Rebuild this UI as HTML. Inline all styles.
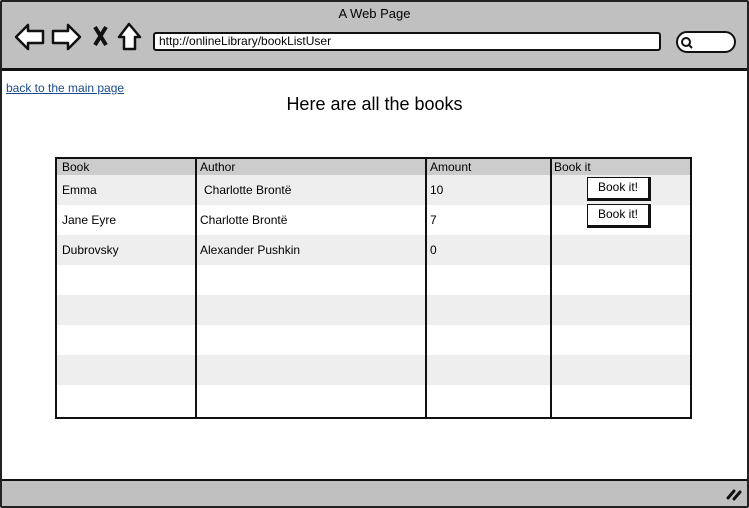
<!DOCTYPE html>
<html><head><style>
*{margin:0;padding:0;box-sizing:border-box}
body{width:749px;height:508px;background:#fff;font-family:"Liberation Sans",sans-serif;position:relative;overflow:hidden;color:#000}
.a{position:absolute}
</style></head><body>
<div class="a" style="left:0;top:0;width:749px;height:508px;border:2px solid #222;border-radius:2px"></div>
<div class="a" style="left:2px;top:2px;width:745px;height:69px;background:#c0c0c0;border-bottom:3px solid #111"></div>
<div class="a" style="left:0;top:6px;width:749px;text-align:center;font-size:13px">A Web Page</div>
<svg class="a" style="left:14px;top:22px" width="130" height="30" viewBox="0 0 130 30">
<path d="M2 15 L14 3 L14 9 L29 9 L29 21 L14 21 L14 27 Z" fill="#fff" stroke="#111" stroke-width="2.5" stroke-linejoin="round"/>
<path d="M66 15 L54 3 L54 9 L39 9 L39 21 L54 21 L54 27 Z" fill="#fff" stroke="#111" stroke-width="2.5" stroke-linejoin="round"/>
<path d="M81 5 L92 23 M92 5 L81 23" stroke="#111" stroke-width="4"/>
<path d="M105 15 L115 2 L126 15 L121 15 L121 27 L110 27 L110 15 Z" fill="#fff" stroke="#111" stroke-width="2.5" stroke-linejoin="round"/>
</svg>
<div class="a" style="left:153px;top:32px;width:508px;height:19px;background:#fff;border:2.5px solid #111;border-radius:3px;font-size:12px;padding-left:4px;line-height:14px">http://onlineLibrary/bookListUser</div>
<div class="a" style="left:676px;top:31px;width:60px;height:22px;background:#fff;border:2.5px solid #111;border-radius:11px"></div>
<svg class="a" style="left:680px;top:36px" width="14" height="14"><circle cx="6" cy="6" r="4" fill="none" stroke="#111" stroke-width="2"/><path d="M9 9 L12 12" stroke="#111" stroke-width="2"/></svg>
<a class="a" style="left:6px;top:81px;font-size:12px;color:#1a4a8c;text-decoration:underline">back to the main page</a>
<div class="a" style="left:0;top:94px;width:749px;text-align:center;font-size:18px">Here are all the books</div>
<div class="a" style="left:55px;top:157px;width:637px;height:262px;border:2px solid #111;background:#fff;overflow:hidden">
<div class="a" style="left:0;top:0;width:637px;height:16px;background:#ccc"></div>
<div class="a" style="left:0;top:16px;width:637px;height:30px;background:#eee"></div>
<div class="a" style="left:0;top:76px;width:637px;height:30px;background:#eee"></div>
<div class="a" style="left:0;top:136px;width:637px;height:30px;background:#eee"></div>
<div class="a" style="left:0;top:196px;width:637px;height:30px;background:#eee"></div>
<div class="a" style="left:138px;top:0;width:2px;height:262px;background:#111"></div>
<div class="a" style="left:368px;top:0;width:2px;height:262px;background:#111"></div>
<div class="a" style="left:493px;top:0;width:2px;height:262px;background:#111"></div>
<div class="a" style="left:5px;top:1px;font-size:12px">Book</div>
<div class="a" style="left:143px;top:1px;font-size:12px">Author</div>
<div class="a" style="left:373px;top:1px;font-size:12px">Amount</div>
<div class="a" style="left:497px;top:1px;font-size:12px">Book it</div>
<div class="a" style="left:5px;top:24px;font-size:12px">Emma</div>
<div class="a" style="left:147px;top:24px;font-size:12px">Charlotte Brontë</div>
<div class="a" style="left:373px;top:24px;font-size:12px">10</div>
<div class="a" style="left:5px;top:54px;font-size:12px">Jane Eyre</div>
<div class="a" style="left:143px;top:54px;font-size:12px">Charlotte Brontë</div>
<div class="a" style="left:373px;top:54px;font-size:12px">7</div>
<div class="a" style="left:5px;top:84px;font-size:12px">Dubrovsky</div>
<div class="a" style="left:143px;top:84px;font-size:12px">Alexander Pushkin</div>
<div class="a" style="left:373px;top:84px;font-size:12px">0</div>
<div class="a" style="left:530px;top:18px;width:64px;height:24px;background:#fff;border:1.5px solid #111;border-right:3px solid #111;border-bottom:3px solid #111;font-size:12px;text-align:center;line-height:18px">Book it!</div>
<div class="a" style="left:530px;top:45px;width:64px;height:24px;background:#fff;border:1.5px solid #111;border-right:3px solid #111;border-bottom:3px solid #111;font-size:12px;text-align:center;line-height:18px">Book it!</div>
</div>
<div class="a" style="left:2px;top:479px;width:745px;height:27px;background:#c0c0c0;border-top:2px solid #111"></div>
<svg class="a" style="left:726px;top:487px" width="16" height="14"><path d="M2 11 L8 4 M8 12 L14 5" stroke="#111" stroke-width="3" stroke-linecap="round"/></svg>
</body></html>
